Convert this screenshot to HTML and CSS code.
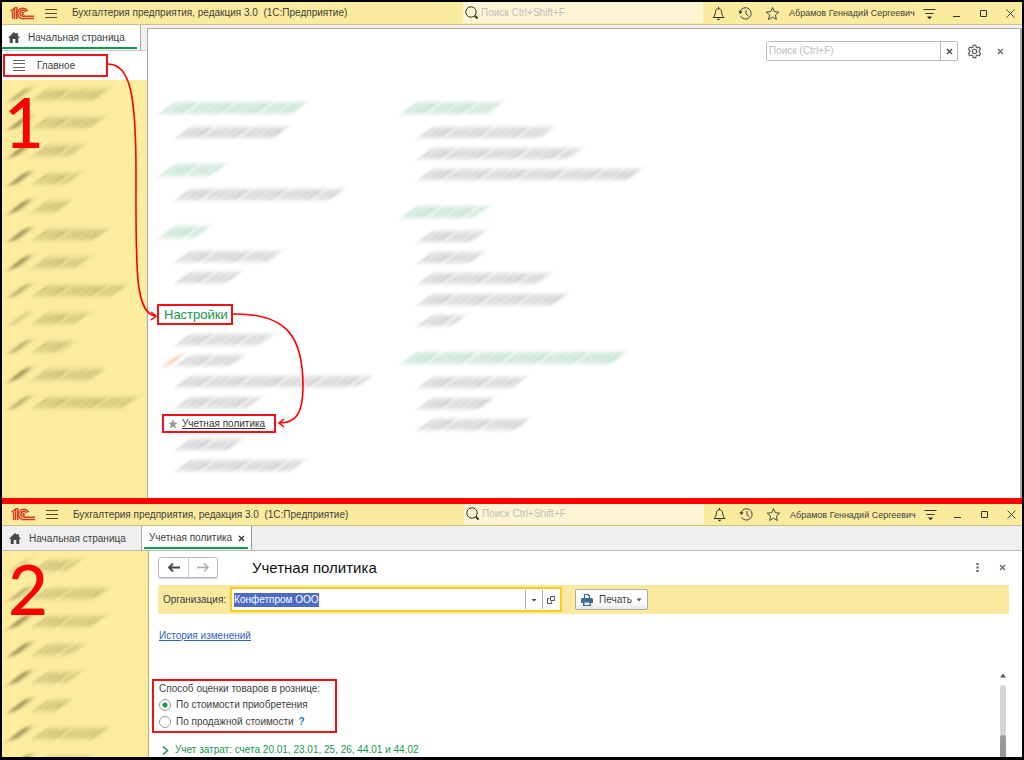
FILE: index.html
```html
<!DOCTYPE html>
<html lang="ru">
<head>
<meta charset="utf-8">
<title>Бухгалтерия предприятия — Учетная политика</title>
<link rel="stylesheet" href="styles.css">
</head>
<body>
<svg class="defs" aria-hidden="true">
  <symbol id="logo" viewBox="0 0 24 13"><g fill="none" stroke="#d93a20" stroke-width="1.5"><path d="M.6 4.2 4.6 1.2V12M2 5.6l.6-.4V12M6.8 12V.6H5"/><path d="M17.6 4.4A5.2 5.2 0 1 0 13.4 11.6H24M15.6 5A3 3 0 1 0 13.4 9.3H24"/><path d="M13.8 6.2a.9.9 0 1 0 0 .8"/></g></symbol>
  <symbol id="burger" viewBox="0 0 12 11"><path d="M0 1.5h12M0 5.5h12M0 9.5h12" stroke="#55502f" fill="none"/></symbol>
  <symbol id="lens" viewBox="0 0 14 14"><g fill="none" stroke="#333"><circle cx="6" cy="6" r="5.2"/><path d="m9.8 9.8 2.8 2.8" stroke-width="2"/></g></symbol>
  <symbol id="bell" viewBox="0 0 15 15"><path d="M2 11.5h11c-1.600-1.500-2.200-3-2.400-5.500C10.400 3.700 9.300 2.800 7.500 2.800S4.600 3.700 4.400 6C4.200 8.500 3.600 10 2 11.500zM7.500 1v2" fill="none" stroke="#333"/><path d="M5.500 12.800h4l-2 1.600z" fill="#333"/></symbol>
  <symbol id="clock" viewBox="0 0 15 15"><path d="M2.200 5.200a5.700 5.700 0 1 1 .3 5M8 4v4l2.500 2" fill="none" stroke="#444"/><path d="M.3 5.200h4.400L2.200 8z" fill="#333"/></symbol>
  <symbol id="star" viewBox="0 0 15 15"><path d="m7.500 1.500 1.800 4.200 4.500.4-3.400 3 1 4.400-3.900-2.300-3.900 2.300 1-4.400-3.400-3 4.500-.4z" fill="none" stroke="#444"/></symbol>
  <symbol id="menu" viewBox="0 0 15 15"><path d="M1.500 3.500h12M3.500 7.500h8" fill="none" stroke="#333"/><path d="M5 10.500h5l-2.500 2.700z" fill="#222"/></symbol>
  <symbol id="min" viewBox="0 0 15 15"><path d="M4 10.500h7" stroke="#333"/></symbol>
  <symbol id="max" viewBox="0 0 15 15"><path d="M4.500 4.500h6v6h-6z" fill="none" stroke="#333"/></symbol>
  <symbol id="close" viewBox="0 0 15 15"><path d="m3.500 3.500 8 8m0-8-8 8" stroke="#444"/></symbol>
  <symbol id="home" viewBox="0 0 12 11"><path d="M6 0 0 5.700h1.700V11h3V7h2.600v4h3V5.700H12L9.800 3.600V1H8.200v1z" fill="#484848"/></symbol>
  <symbol id="cross" viewBox="0 0 9 9"><path d="m2 2 5 5m0-5L2 7" stroke="currentColor" stroke-width="1.300"/></symbol>
</svg>

<div class="screens">
<section class="screen">
  <header class="titlebar">
    <div class="brand">
      <svg class="logo"><use href="#logo"/></svg>
      <button class="icon-btn burger" aria-label="Меню"><svg><use href="#burger"/></svg></button>
      <span class="app-name">Бухгалтерия предприятия, редакция 3.0&nbsp; (1С:Предприятие)</span>
    </div>
    <label class="global-search"><svg><use href="#lens"/></svg><input type="text" placeholder="Поиск Ctrl+Shift+F" aria-label="Поиск"></label>
    <div class="tools">
      <div class="tool-group">
        <button class="icon-btn" aria-label="Уведомления"><svg><use href="#bell"/></svg></button>
        <button class="icon-btn" aria-label="История"><svg><use href="#clock"/></svg></button>
        <button class="icon-btn" aria-label="Избранное"><svg><use href="#star"/></svg></button>
        <span class="user">Абрамов Геннадий Сергеевич</span>
      </div>
      <div class="tool-group">
        <button class="icon-btn" aria-label="Сервис"><svg><use href="#menu"/></svg></button>
        <button class="icon-btn" aria-label="Свернуть"><svg><use href="#min"/></svg></button>
        <button class="icon-btn" aria-label="Развернуть"><svg><use href="#max"/></svg></button>
        <button class="icon-btn" aria-label="Закрыть"><svg><use href="#close"/></svg></button>
      </div>
    </div>
  </header>

  <div class="start">
    <div class="start-left">
      <button class="tab tab-home tab-current"><svg class="home"><use href="#home"/></svg>Начальная страница</button>
      <div class="section-row">
        <button class="section-btn marked"><svg viewBox="0 0 12 11"><path d="M0 .5h12M0 3.500h12M0 7.500h12M0 10.500h12" stroke="#666"/></svg>Главное</button>
      </div>
      <nav class="sections">
        <p><i class="smudge ico"></i><i class="smudge" style="width:64px"></i></p>
        <p><i class="smudge ico dark"></i><i class="smudge" style="width:57px"></i></p>
        <p><i class="smudge ico dark"></i><i class="smudge" style="width:38px"></i></p>
        <p><i class="smudge ico dark"></i><i class="smudge" style="width:34px"></i></p>
        <p><i class="smudge ico dark"></i><i class="smudge" style="width:24px"></i></p>
        <p><i class="smudge ico dark"></i><i class="smudge" style="width:62px"></i></p>
        <p><i class="smudge ico dark"></i><i class="smudge" style="width:44px"></i></p>
        <p><i class="smudge ico"></i><i class="smudge" style="width:80px"></i></p>
        <p><i class="smudge ico pale"></i><i class="smudge" style="width:42px"></i></p>
        <p><i class="smudge ico"></i><i class="smudge" style="width:29px"></i></p>
        <p><i class="smudge ico dark"></i><i class="smudge" style="width:57px"></i></p>
        <p><i class="smudge ico"></i><i class="smudge" style="width:91px"></i></p>
        <b class="step">1</b>
      </nav>
    </div>

    <main class="start-main">
      <div class="find-row">
        <div class="find"><input type="text" placeholder="Поиск (Ctrl+F)" aria-label="Поиск"><button aria-label="Очистить"><svg><use href="#cross"/></svg></button></div>
        <button class="icon-btn" aria-label="Настройка"><svg viewBox="0 0 15 15"><g fill="none" stroke="#555" stroke-width="1.100"><path d="M6.200 1.200h2.600l.4 1.900 1.300.7 1.800-.7 1.300 2.200-1.400 1.300v1.600l1.400 1.300-1.300 2.200-1.800-.7-1.300.7-.4 1.900H6.200l-.4-1.900-1.300-.7-1.800.7-1.300-2.200 1.400-1.300V6.600L1.400 5.300l1.300-2.200 1.800.7 1.300-.7z"/><circle cx="7.500" cy="7.500" r="2.200"/></g></svg></button>
        <button class="icon-btn small" aria-label="Закрыть"><svg><use href="#cross"/></svg></button>
      </div>
      <div class="commands">
        <div class="column">
          <div class="group"><h3><i class="smudge green" style="width:132px"></i></h3>
            <p><i class="smudge" style="width:99px"></i></p></div>
          <div class="group"><h3><i class="smudge green" style="width:52px"></i></h3>
            <p><i class="smudge" style="width:155px"></i></p></div>
          <div class="group"><h3><i class="smudge green" style="width:37px"></i></h3>
            <p><i class="smudge" style="width:92px"></i></p>
            <p><i class="smudge" style="width:51px"></i></p></div>
          <div class="group"><h3><span class="heading marked">Настройки</span></h3>
            <p><i class="smudge" style="width:84px"></i></p>
            <p class="with-flag"><i class="smudge orange"></i><i class="smudge" style="width:55px"></i></p>
            <p><i class="smudge" style="width:182px"></i></p>
            <p><i class="smudge" style="width:72px"></i></p>
            <p><span class="policy marked"><svg viewBox="0 0 10 10"><path d="m5 0 1.300 3.500H10L7.100 5.800l1 3.800L5 7.400 1.900 9.600l1-3.800L0 3.500h3.700z" fill="#999"/></svg><a href="#policy">Учетная политика</a></span></p>
            <p><i class="smudge" style="width:53px"></i></p>
            <p><i class="smudge" style="width:115px"></i></p></div>
        </div>
        <div class="column">
          <div class="group"><h3><i class="smudge green" style="width:86px"></i></h3>
            <p><i class="smudge" style="width:122px"></i></p>
            <p><i class="smudge" style="width:150px"></i></p>
            <p><i class="smudge" style="width:212px"></i></p></div>
          <div class="group"><h3><i class="smudge green" style="width:73px"></i></h3>
            <p><i class="smudge" style="width:54px"></i></p>
            <p><i class="smudge" style="width:53px"></i></p>
            <p><i class="smudge" style="width:120px"></i></p>
            <p><i class="smudge" style="width:136px"></i></p>
            <p><i class="smudge" style="width:34px"></i></p></div>
          <div class="group"><h3><i class="smudge green" style="width:212px"></i></h3>
            <p><i class="smudge" style="width:94px"></i></p>
            <p><i class="smudge" style="width:63px"></i></p>
            <p><i class="smudge" style="width:97px"></i></p></div>
        </div>
      </div>
    </main>
  </div>
  <svg class="arrows" width="320" height="440" viewBox="0 0 320 440" aria-hidden="true"><g fill="none" stroke="#f00" stroke-width="1.600">
    <path d="M106 62C128 62 134 92 134 170C134 262 132 312 154 314M149 310l5 4-5 4"/>
    <path d="M231 312C286 311 301 336 301 384C301 412 294 421 277 421M282 417l-5 4 5 4"/></g></svg>
</section>

<section class="screen second">
  <header class="titlebar">
    <div class="brand">
      <svg class="logo"><use href="#logo"/></svg>
      <button class="icon-btn burger" aria-label="Меню"><svg><use href="#burger"/></svg></button>
      <span class="app-name">Бухгалтерия предприятия, редакция 3.0&nbsp; (1С:Предприятие)</span>
    </div>
    <label class="global-search"><svg><use href="#lens"/></svg><input type="text" placeholder="Поиск Ctrl+Shift+F" aria-label="Поиск"></label>
    <div class="tools">
      <div class="tool-group">
        <button class="icon-btn" aria-label="Уведомления"><svg><use href="#bell"/></svg></button>
        <button class="icon-btn" aria-label="История"><svg><use href="#clock"/></svg></button>
        <button class="icon-btn" aria-label="Избранное"><svg><use href="#star"/></svg></button>
        <span class="user">Абрамов Геннадий Сергеевич</span>
      </div>
      <div class="tool-group">
        <button class="icon-btn" aria-label="Сервис"><svg><use href="#menu"/></svg></button>
        <button class="icon-btn" aria-label="Свернуть"><svg><use href="#min"/></svg></button>
        <button class="icon-btn" aria-label="Развернуть"><svg><use href="#max"/></svg></button>
        <button class="icon-btn" aria-label="Закрыть"><svg><use href="#close"/></svg></button>
      </div>
    </div>
  </header>
  <div class="tabs">
    <button class="tab tab-home"><svg class="home"><use href="#home"/></svg>Начальная страница</button>
    <button class="tab tab-doc tab-current">Учетная политика<svg class="tab-x"><use href="#cross"/></svg></button>
  </div>
  <div class="workspace">
    <nav class="sections">
      <p><i class="smudge ico pale"></i><i class="smudge" style="width:34px"></i></p>
      <p><i class="smudge ico"></i><i class="smudge" style="width:64px"></i></p>
      <p><i class="smudge ico dark"></i><i class="smudge" style="width:58px"></i></p>
      <p><i class="smudge ico dark"></i><i class="smudge" style="width:38px"></i></p>
      <p><i class="smudge ico dark"></i><i class="smudge" style="width:34px"></i></p>
      <p><i class="smudge ico dark"></i><i class="smudge" style="width:24px"></i></p>
      <p><i class="smudge ico dark"></i><i class="smudge" style="width:62px"></i></p>
      <p><i class="smudge ico dark"></i><i class="smudge" style="width:44px"></i></p>
      <b class="step">2</b>
    </nav>
    <main class="form">
      <div class="form-head">
        <div class="history"><button aria-label="Назад"><svg viewBox="0 0 12 9"><path d="M5 .5 1 4.500l4 4M1 4.500h11" fill="none" stroke="#444" stroke-width="1.800"/></svg></button><button aria-label="Вперед"><svg viewBox="0 0 12 9"><path d="m7 .5 4 4-4 4M11 4.500H0" fill="none" stroke="#aaa" stroke-width="1.500"/></svg></button></div>
        <h1>Учетная политика</h1>
        <button class="icon-btn more" aria-label="Еще"><svg viewBox="0 0 15 15"><path d="M6.500 3h2v2h-2zM6.500 6.500h2v2h-2zM6.500 10h2v2h-2z" fill="#555"/></svg></button>
        <button class="icon-btn small" aria-label="Закрыть"><svg><use href="#cross"/></svg></button>
      </div>
      <div class="org-bar">
        <label for="org">Организация:</label>
        <div class="org-field">
          <input id="org" type="text" value="Конфетпром ООО">
          <button aria-label="Выбрать"><svg viewBox="0 0 10 10"><path d="M2.500 4h5L5 6.500z" fill="#444"/></svg></button>
          <button aria-label="Открыть"><svg viewBox="0 0 10 10"><path d="M4.500 1.500h4v4h-4zM3.500 3.500h-2v5h4v-2" fill="none" stroke="#555"/></svg></button>
        </div>
        <button class="print"><svg viewBox="0 0 12 12"><path d="M3 0h4.500L9 1.500V4h2l1 1v4h-2v3H2V9H0V5l1-1h2z" fill="#3f6a94"/><path d="M4 1h3v1h1v2H4zM3.500 8.500h5V11h-5z" fill="#eef3f8"/></svg>Печать<svg class="caret" viewBox="0 0 6 4"><path d="M.5.500h5L3 3.500z" fill="#555"/></svg></button>
      </div>
      <a class="history-link" href="#history">История изменений</a>
      <div class="scroll-area">
        <div class="settings">
          <fieldset class="marked">
            <legend>Способ оценки товаров в рознице:</legend>
            <label><input type="radio" name="method" checked>По стоимости приобретения</label>
            <label><input type="radio" name="method">По продажной стоимости<span class="help">?</span></label>
          </fieldset>
          <button class="fold"><svg viewBox="0 0 7 9"><path d="m1 .5 4.500 4L1 8.500" fill="none" stroke="#12984c" stroke-width="1.500"/></svg>Учет затрат: счета 20.01, 23.01, 25, 26, 44.01 и 44.02</button>
        </div>
        <div class="scrollbar"><svg viewBox="0 0 6 5"><path d="M0 4.500 3 .5l3 4z" fill="#555"/></svg><div class="track"><div class="thumb"></div></div></div>
      </div>
    </main>
  </div>
</section>
</div>
<script src="script.js"></script>
</body>
</html>
```
FILE: styles.css
```css
* { box-sizing: border-box; }
body {
  margin: 0;
  background: #000;
  color: #404040;
  font: 10px/14px "Liberation Sans", Arial, sans-serif;
}
button, input { font: inherit; color: inherit; margin: 0; }
button { padding: 0; border: 0; background: none; }
input { min-width: 0; outline: 0; }
p, h1, h3 { margin: 0; font-weight: normal; }
svg { display: block; flex: none; }
.defs { position: absolute; width: 0; height: 0; }

.screens {
  display: flex;
  flex-direction: column;
  height: 100vh;
  padding: 2px 2px 3px;
}
.screen { position: relative; display: flex; flex-direction: column; background: #f0f0f0; }
.screen.second { flex: 1; min-height: 0; overflow: hidden; border-top: 6px solid #f00; }
.marked { border: 2px solid #f01018; }

/* Title bar */
.titlebar {
  display: grid;
  grid-template-columns: 1fr 240px 319px;
  height: 23px;
  background: #faeb9e;
  border-bottom: 1px solid #c9bf87;
}
.second .titlebar { height: 22px; padding-left: 1px; grid-template-columns: 1fr 240px 318px; }
.brand { display: flex; align-items: center; padding-left: 8px; }
.logo { width: 24px; height: 13px; }
.burger { margin: 0 15px 0 11px; }
.icon-btn { display: flex; }
.icon-btn svg { width: 15px; height: 15px; }
.burger svg { width: 12px; height: 11px; }
.icon-btn.small { color: #666; }
.icon-btn.small svg { width: 9px; height: 9px; }
.app-name { white-space: nowrap; }
.global-search {
  display: flex;
  align-items: center;
  gap: 2px;
  margin-bottom: 1px;
  padding-left: 2px;
  background: #fdf5d3;
}
.global-search svg { width: 14px; height: 14px; }
.global-search input { flex: 1; padding: 0; border: 0; background: none; }
input::placeholder { color: #bdbdbd; opacity: 1; }
.tools { display: flex; justify-content: space-between; align-items: center; padding: 0 4px 0 8px; }
.second .tools { padding-right: 3px; }
.tool-group { display: flex; align-items: center; gap: 12px; }
.user { margin-left: -3px; font-size: 9px; white-space: nowrap; }

/* Tabs */
.tabs { display: flex; height: 25px; border-bottom: 1px solid #b9b9b9; }
.tab { display: flex; align-items: center; white-space: nowrap; position: relative; }
.tab-home { width: 139px; height: 25px; padding-left: 6px; gap: 8px; border-right: 1px solid #aaa; }
.second .tab-home { width: 140px; padding-left: 7px; }
.home { width: 12px; height: 11px; }
.tab-current { background: #fff; }
.tab-current::after {
  content: "";
  position: absolute;
  left: 0;
  right: 3px;
  bottom: 1px;
  height: 2px;
  background: #12984c;
}
.tab-doc { height: 24px; padding: 0 5px 0 7px; gap: 5px; border-right: 1px solid #999; }
.tab-doc::after { left: 2px; }
.tab-x { width: 9px; height: 9px; color: #333; }

/* Sections panel */
.start { display: grid; grid-template-columns: 145px 1fr; }
.start-left { display: flex; flex-direction: column; }
.section-row { padding: 3px 1px; background: #fff; border-top: 1px solid #ccc; }
.section-btn {
  display: flex;
  align-items: center;
  gap: 12px;
  width: 105px;
  height: 23px;
  padding-left: 8px;
}
.section-btn svg { width: 12px; height: 11px; }
.sections { position: relative; flex: 1; min-height: 0; background: #fbec9e; overflow: hidden; }
.sections p { display: flex; align-items: center; gap: 15px; height: 28px; padding-left: 15px; }
.sections .smudge { color: #55531c; }
.sections .smudge.ico { width: 8px; height: 13px; color: #4b4520; opacity: .4; }
.sections .smudge.dark { opacity: .6; }
.sections .smudge.pale { opacity: .2; }
.step {
  position: absolute;
  left: 2px;
  top: 6px;
  color: #f00;
  font: 500 69px/72px Lato, sans-serif;
}
.second .step { left: 6px; top: 2px; }

/* Obscured captions */
.smudge {
  display: block;
  flex: none;
  height: 11px;
  color: #555;
  opacity: .26;
  transform: skewX(-52deg);
  filter: blur(2px);
  background: repeating-linear-gradient(90deg, currentColor 0 3px, transparent 6px, currentColor 10px 12px, transparent 15px, currentColor 17px 22px, transparent 24px 26px, currentColor 31px, transparent 37px);
  background-color: color-mix(in srgb, currentColor 30%, transparent);
}
.smudge.green { height: 12px; color: #2c9a5e; }
.smudge.orange { width: 5px; color: #f60; opacity: .4; }

/* Start page */
.start-main { margin-top: 3px; background: #fff; border: 1px solid #aaa; border-width: 1px 2px 0 1px; padding-bottom: 22px; }
.find-row { display: flex; justify-content: flex-end; align-items: center; gap: 9px; padding: 12px 15px 0 0; }
.find { display: flex; width: 192px; height: 20px; border: 1px solid #bbb; border-radius: 2px; }
.find input { flex: 1; padding: 0 2px; border: 0; }
.find button { display: flex; align-items: center; justify-content: center; width: 17px; border-left: 1px solid #bbb; }
.find svg { width: 9px; height: 9px; }
.find-row .small { margin-left: 5px; }
.commands { display: grid; grid-template-columns: 242px 1fr; padding: 32px 0 0 9px; }
.column { display: flex; flex-direction: column; gap: 12px; }
.group h3 { display: flex; align-items: center; height: 29px; }
.group p { display: flex; align-items: center; height: 21px; padding-left: 26px; }
.group h3 > .smudge { margin-left: 10px; }
.with-flag { gap: 7px; }
.group .with-flag { padding-left: 14px; }
.heading { padding: 0 3px 0 5px; color: #12984c; font-size: 13px; line-height: 17px; }
.policy { display: flex; align-items: center; gap: 4px; height: 19px; margin-left: -21px; padding: 0 9px 0 4px; white-space: nowrap; }
.policy svg { width: 10px; height: 10px; }
.policy a { color: #333; }
.arrows { position: absolute; left: 0; top: 0; pointer-events: none; }

/* Accounting policy form */
.workspace { display: grid; grid-template-columns: 146px 1fr; flex: 1; min-height: 0; }
.form { display: flex; flex-direction: column; min-height: 0; background: #fff; border-left: 1px solid #b5ad80; }
.form-head { display: flex; align-items: center; padding: 6px 15px 0 9px; }
.history { display: flex; border: 1px solid #bbb; border-radius: 3px; box-shadow: 0 1px 1px #ccc; }
.history button { display: flex; align-items: center; justify-content: center; width: 29px; height: 19px; }
.history button + button { border-left: 1px solid #ccc; }
.history svg { width: 12px; height: 9px; }
h1 { flex: 1; margin-left: 34px; color: #111; font-size: 15px; line-height: 20px; }
.more { margin-right: 13px; }
.org-bar { display: flex; align-items: center; height: 29px; margin: 7px 13px 0 9px; padding-left: 5px; background: #fbe9a0; }
.org-field {
  display: flex;
  width: 332px;
  height: 25px;
  margin: 0 13px 0 4px;
  padding: 1px;
  border: 2px solid #fccb20;
  background: #fff;
}
.org-field input { flex: 1; padding: 0 1px; border: 0; }
.org-field button { display: flex; align-items: center; justify-content: center; width: 17px; border-left: 1px solid #aaa; }
.org-field svg { width: 10px; height: 10px; }
#org::selection { background: #4d6bc6; color: #fff; }
.print {
  display: flex;
  align-items: center;
  gap: 6px;
  height: 21px;
  padding: 0 5px;
  border: 1px solid #aaa;
  border-radius: 2px;
  background: linear-gradient(#fff 60%, #e8e8e8);
}
.print svg { width: 12px; height: 12px; }
.print .caret { width: 6px; height: 4px; margin-left: -2px; }
.history-link { align-self: flex-start; margin: 15px 0 0 10px; color: #2f62c0; }
.scroll-area { display: flex; flex: 1; min-height: 0; margin-top: 28px; }
.settings { flex: 1; padding: 8px 0 0 3px; }
fieldset { display: flex; flex-direction: column; width: 185px; height: 54px; margin: 0; padding: 1px 0 0 5px; white-space: nowrap; }
fieldset.marked { border-width: 2px; }
legend { float: left; padding: 0; }
fieldset label { display: flex; align-items: center; height: 17px; }
fieldset input {
  appearance: none;
  width: 12px;
  height: 12px;
  margin-right: 5px;
  border: 1px solid #999;
  border-radius: 50%;
  background: #fff;
}
fieldset input:checked { background: radial-gradient(#12984c 2px, #fff 3px); }
.help { margin-left: 5px; color: #1580c8; font-weight: bold; }
.fold { display: flex; align-items: center; gap: 6px; margin: 10px 0 0 10px; color: #12984c; white-space: nowrap; }
.fold svg { width: 7px; height: 9px; }
.scrollbar { display: flex; flex-direction: column; align-items: center; width: 8px; margin-right: 15px; padding-top: 2px; }
.scrollbar svg { width: 6px; height: 5px; margin-bottom: 7px; }
.track { display: flex; flex: 1; align-items: flex-end; width: 6px; border-radius: 3px 3px 0 0; background: #d5d5d5; }
.thumb { width: 6px; height: 30%; border-radius: 3px 3px 0 0; background: #999; }
```
FILE: script.js
```js
const org = document.getElementById('org');
org.focus({ preventScroll: true });
org.select();
```
